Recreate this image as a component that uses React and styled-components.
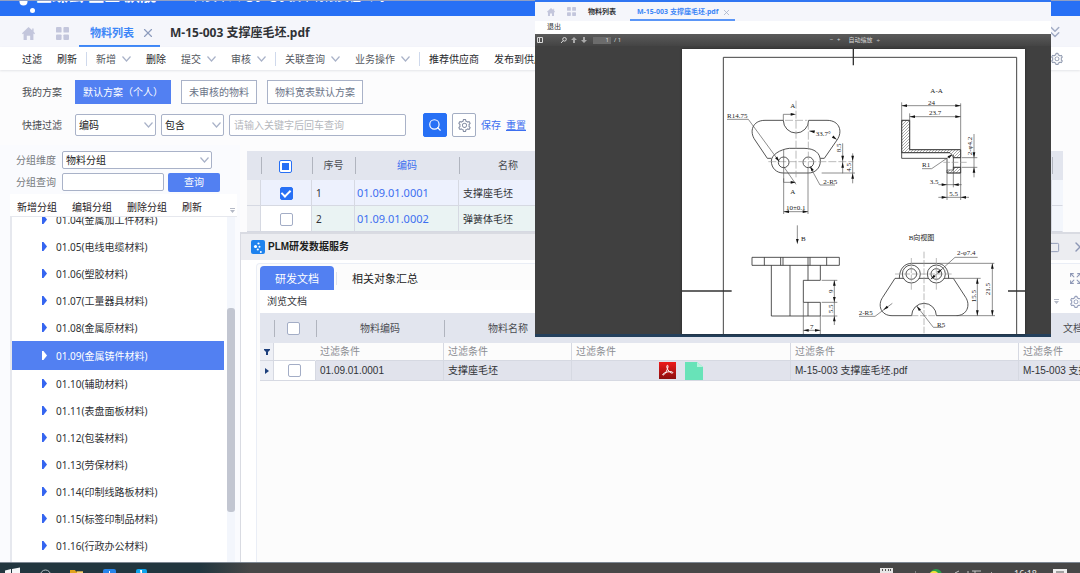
import React from 'react';
import styled, { createGlobalStyle } from 'styled-components';
import { ChevronsDown, Search, X, Square, Expand } from 'lucide-react';
import { AiOutlineSetting } from 'react-icons/ai';

const GlobalStyle = createGlobalStyle`
  * {
    box-sizing: border-box;
  }
  body {
    margin: 0;
    overflow: hidden;
    font-family: 'Noto Sans', 'Noto Sans CJK SC', sans-serif;
    font-size: 10px;
    line-height: 16px;
    color: #303236;
  }
  button, input, select {
    font: inherit;
    color: inherit;
  }
  button {
    padding: 0;
    border: none;
    background: none;
    white-space: nowrap;
    cursor: pointer;
  }
`;

const Page = styled.div`
  position: relative;
  display: flex;
  flex-direction: column;
  height: 100vh;
  overflow: hidden;
  background: #fcfcfd;
`;

/* ---------- top banner and tabs ---------- */

const Banner = styled.header`
  display: flex;
  flex: none;
  align-items: flex-start;
  height: 16px;
  padding-left: 16px;
  overflow: hidden;
  background: #2770f5;
  border-top: 1px solid #8f9fc4;
  color: #fff;
  white-space: nowrap;
`;
const Brand = styled.div`
  width: 157px;
  margin-top: -16px;
  font-size: 16px;
  font-weight: 700;
  line-height: 20px;
`;
const Company = styled.div`
  margin-top: -12px;
  font-size: 12px;
  line-height: 16px;
`;
const TabStrip = styled.nav`
  display: flex;
  flex: none;
  align-items: center;
  height: 31px;
  padding: 0 16px 0 22px;
  background: #f5f6fb;
  color: #c3c7dc;
`;
const IconSlot = styled.button`
  display: flex;
  width: 13px;
  margin: 4px 21px 0 0;
  color: #c3c6dc;
`;
const Tab = styled.button`
  display: flex;
  align-items: center;
  gap: 7px;
  height: 31px;
  padding: 5px 5px 0 11px;
  margin-left: -11px;
  border-bottom: 2px solid ${props => (props.$active ? '#3d86f7' : 'transparent')};
  color: ${props => (props.$active ? '#3d86f7' : '#303236')};
  font-size: ${props => (props.$active ? '11px' : '12px')};
  font-weight: 700;
  & + & {
    margin-left: 0;
    padding-left: 10px;
  }
`;
const Spacer = styled.div`
  flex: 1;
`;
const Toolbar = styled.div`
  z-index: 1;
  display: flex;
  flex: none;
  align-items: center;
  gap: 15px;
  height: 23px;
  padding: 0 16px 0 22px;
  background: #fff;
  box-shadow: 0 1px 2px #e4e5e8;
  color: #8d97ad;
`;
const ToolButton = styled.button`
  display: flex;
  align-items: center;
  gap: 6px;
  color: ${props => (props.$menu ? '#54575e' : '#26282c')};
`;
const ToolSeparator = styled.span`
  flex: none;
  width: 1px;
  height: 14px;
  margin: 0 -6px;
  background: #cfd9ec;
`;

/* ---------- filters ---------- */

const Filters = styled.section`
  display: flex;
  flex: none;
  flex-direction: column;
  gap: 9px;
  height: 75px;
  padding: 10px 22px 0;
`;
const FilterRow = styled.div`
  display: flex;
  align-items: center;
  gap: 5px;
  height: 24px;
`;
const FilterLabel = styled.label`
  width: 48px;
  color: #4b4d52;
  white-space: nowrap;
`;
const Scheme = styled.button`
  height: 24px;
  margin-right: 5px;
  padding: 0 7px;
  border: 1px solid ${props => (props.$active ? '#5280f2' : '#a9b2c8')};
  background: ${props => (props.$active ? '#5280f2' : '#fff')};
  color: ${props => (props.$active ? '#fff' : '#6b7488')};
`;
const SelectBox = styled.span`
  display: grid;
  align-items: center;
  width: ${props => props.$width}px;
  color: #a9b2c8;
  svg {
    grid-area: 1 / 1;
    justify-self: end;
    margin-right: 3px;
    pointer-events: none;
  }
`;
const SelectField = styled.select`
  grid-area: 1 / 1;
  width: 100%;
  height: ${props => props.$height}px;
  padding: 0 3px;
  appearance: none;
  border: 1px solid #a9b2c8;
  border-radius: 2px;
  background: #fff;
  color: #222;
`;
const TextField = styled.input`
  width: ${props => props.$width}px;
  height: ${props => props.$height}px;
  padding: 0 4px;
  border: 1px solid #a9b2c8;
  border-radius: 2px;
  background: #fff;
  &::placeholder {
    color: #b5b7bd;
  }
`;
const SquareButton = styled.button`
  display: flex;
  align-items: center;
  justify-content: center;
  width: 24px;
  height: 24px;
  border: 1px solid ${props => (props.$primary ? '#2770f5' : '#a3adc3')};
  border-radius: 2px;
  background: ${props => (props.$primary ? '#2770f5' : '#fff')};
  color: ${props => (props.$primary ? '#fff' : '#838ca3')};
  margin-left: ${props => (props.$primary ? '12px' : '0')};
`;
const TextLink = styled.a`
  color: #3d6ff0;
  text-decoration: none;
  & + & {
    text-decoration: underline;
  }
`;

/* ---------- group tree ---------- */

const Body = styled.div`
  display: flex;
  flex: 1;
  min-height: 0;
`;
const Sidebar = styled.aside`
  display: flex;
  flex: none;
  flex-direction: column;
  width: 240px;
  padding: 4px 3px 0 10px;
  background: #fafbfe;
`;
const GroupRow = styled.div`
  display: flex;
  align-items: center;
  gap: 4px;
  height: 22px;
  padding-left: 6px;
`;
const GroupLabel = styled.label`
  width: 42px;
  color: #777a80;
  white-space: nowrap;
`;
const QueryButton = styled.button`
  width: 52px;
  height: 19px;
  border-radius: 2px;
  background: #5280f2;
  color: #fff;
`;
const GroupActions = styled.div`
  display: flex;
  flex: none;
  gap: 15px;
  height: 23px;
  margin-top: 1px;
  padding: 4px 2px 0 7px;
  border-bottom: 1px solid #e6e8ee;
  background: #fff;
  color: #1f2125;
  svg {
    margin: 10px 0 0 auto;
  }
`;
const TreeBox = styled.div`
  display: flex;
  flex: 1;
  min-height: 0;
  margin-right: 2px;
  overflow: hidden;
  border-left: 2px solid #e6e8ee;
  background: #fff;
`;
const Tree = styled.ul`
  flex: 1;
  margin: -11px 3px 0 0;
  padding: 0;
  list-style: none;
`;
const TreeItem = styled.li`
  display: flex;
  align-items: center;
  gap: 9px;
  height: ${props => (props.$active ? '29px' : '27px')};
  padding-left: 30px;
  background: ${props => (props.$active ? '#5280f2' : 'transparent')};
  color: ${props => (props.$active ? '#fff' : '#303236')};
  white-space: nowrap;
  svg {
    color: ${props => (props.$active ? '#fff' : '#3565f0')};
  }
`;
const ScrollTrack = styled.div`
  width: 8px;
  padding-top: 91px;
  background: #f3f6fc;
`;
const ScrollThumb = styled.div`
  height: 204px;
  border-radius: 3px;
  background: #c2c6d1;
`;

/* ---------- data grids ---------- */

const Main = styled.main`
  display: flex;
  flex: 1;
  flex-direction: column;
  min-width: 0;
  padding-top: 6px;
`;
const MaterialWrap = styled.div`
  flex: none;
  padding: 0 17px 0 7px;
`;
const Grid = styled.table`
  width: ${props => props.$width || '100%'};
  border-collapse: separate;
  border-spacing: 0;
  table-layout: fixed;
`;
const HeadCell = styled.th`
  height: ${props => props.$height}px;
  padding: 0 ${props => (props.$check ? '3px' : '0')} 0 0;
  background: ${props => (props.$first ? 'none' : 'linear-gradient(#b0b4be, #b0b4be) left center / 1px 17px no-repeat')} #e2e5ee;
  color: ${props => (props.$link ? '#3d6ff0' : '#4b4d52')};
  font-weight: 400;
  line-height: 15px;
  white-space: nowrap;
`;
const Cell = styled.td`
  height: ${props => props.$height}px;
  padding: ${props => (props.$center ? '0' : '0 4px')};
  border-bottom: 1px solid #d6d9e2;
  border-right: 1px solid ${props => props.$line || '#d6d9e2'};
  background: ${props => props.$bg || '#fcfcfc'};
  text-align: ${props => (props.$center ? 'center' : 'left')};
  white-space: nowrap;
  overflow: hidden;
`;
const CodeLink = styled.a`
  margin-left: -2px;
  color: #3d6ff0;
  font-size: 11px;
  text-decoration: none;
`;
const Check = styled.input`
  display: inline-grid;
  place-content: center;
  width: 13px;
  height: 13px;
  margin: 0;
  vertical-align: middle;
  appearance: none;
  border: 1px solid #a3adc6;
  border-radius: 2px;
  background: #fff;
  &:checked {
    border-color: #2770f5;
    background: #2770f5;
  }
  &:checked::before {
    content: '';
    width: 4px;
    height: 7px;
    margin-bottom: 2px;
    border: solid #fff;
    border-width: 0 2px 2px 0;
    rotate: 45deg;
  }
  &:indeterminate {
    border-color: #2770f5;
  }
  &:indeterminate::before {
    content: '';
    width: 7px;
    height: 7px;
    background: #2770f5;
  }
`;
const FilterHint = styled.span`
  color: #8b8d93;
`;

/* ---------- PLM panel ---------- */

const Panel = styled.section`
  display: flex;
  flex: 1;
  flex-direction: column;
  min-height: 0;
  border: solid #d9dbe2;
  border-width: 2px 0 0 1px;
  background: #fff;
  font-family: 'Liberation Sans', 'Noto Sans CJK SC', sans-serif;
`;
const PanelTitle = styled.div`
  display: flex;
  flex: none;
  align-items: center;
  gap: 3px;
  height: 26px;
  padding-left: 10px;
  background: #ecedf1;
  color: #a3adc6;
`;
const TitleText = styled.h2`
  flex: 1;
  margin: 0;
  color: #1c1d20;
  font-size: 10px;
`;
const WindowButton = styled.button`
  display: flex;
  flex: none;
  width: 20px;
  color: #8d97b5;
  & + & {
    width: 8px;
    overflow: hidden;
  }
  svg {
    flex: none;
  }
`;
const PanelBody = styled.div`
  flex: 1;
  min-height: 0;
  margin: 3px 0 0 15px;
  padding-left: 3px;
  overflow: hidden;
  border: solid #eaeef6;
  border-width: 1px 0 0 1px;
  border-radius: 4px 0 0 0;
  background: #fcfcfc;
`;
const PanelTabs = styled.div`
  display: flex;
  align-items: center;
  height: 26px;
  padding-top: 2px;
  color: #8d97b5;
`;
const PanelTab = styled.button`
  height: 24px;
  padding: 2px 15px 0;
  border-radius: 4px 4px 0 0;
  background: ${props => (props.$active ? '#5280f2' : 'transparent')};
  color: ${props => (props.$active ? '#fff' : '#222')};
  font-size: 11px;
`;
const TabDivider = styled.span`
  width: 1px;
  height: 13px;
  margin-left: 2px;
  background: #dfe3ec;
`;
const CutIcon = styled.button`
  display: flex;
  width: 11px;
  overflow: hidden;
  color: #8d97b5;
  svg {
    flex: none;
  }
`;
const PanelTools = styled.div`
  display: flex;
  align-items: center;
  gap: 10px;
  height: 23px;
  padding-left: 7px;
  background: #fff;
  color: #a3adc6;
  button:first-child {
    color: #36383d;
  }
`;
const FileIcons = styled.span`
  display: flex;
  justify-content: center;
  gap: 9px;
`;

/* ---------- floating document viewer ---------- */

const Viewer = styled.section`
  position: absolute;
  z-index: 2;
  top: 0;
  left: 535px;
  display: flex;
  flex-direction: column;
  width: 516px;
  height: 337px;
  border-top: 2px solid #2f75f2;
  border-bottom: 3px solid #24405c;
  background: #404040;
  font-size: 7px;
  line-height: 10px;
`;
const ViewerTabs = styled.div`
  display: flex;
  flex: none;
  align-items: center;
  height: 19px;
  padding-left: 12px;
  background: #f5f6fb;
  color: #c3c6dc;
  svg {
    margin-right: 12px;
  }
`;
const ViewerTab = styled.button`
  display: flex;
  align-items: center;
  gap: 4px;
  height: 19px;
  margin-right: 10px;
  padding: 3px 4px 0 0;
  border-bottom: 2px solid ${props => (props.$active ? '#5b96f7' : 'transparent')};
  color: ${props => (props.$active ? '#3d86f7' : '#303236')};
  font-weight: 700;
  & + & {
    padding-left: 7px;
  }
  svg {
    margin-right: 0;
  }
`;
const ViewerMenu = styled.div`
  flex: none;
  height: 13px;
  padding: 1px 12px 0;
  background: #fff;
  color: #303236;
`;
const PdfToolbar = styled.div`
  display: flex;
  flex: none;
  align-items: center;
  height: 12px;
  padding: 0 171px 0 2px;
  background: linear-gradient(#5b5b5b, #444);
  color: #d8d8d8;
  font-size: 6px;
  svg {
    flex: none;
    margin-right: 4px;
  }
`;
const PageNumber = styled.input`
  width: 18px;
  height: 7px;
  margin: 0 3px 0 2px;
  padding: 0 2px;
  border: none;
  background: #6c6c6c;
  color: #ddd;
  text-align: right;
`;
const ZoomText = styled.span`
  margin: 0 4px;
  line-height: 7px;
`;
const PdfPage = styled.div`
  flex: 1;
  min-height: 0;
  margin: 3px 26px 0 147px;
  overflow: hidden;
  background: #fff;
  box-shadow: 0 0 2px #222;
  svg {
    display: block;
  }
`;
const DrawingText = styled.text`
  fill: #222;
  stroke: none;
  font-family: 'Liberation Serif', 'Noto Sans CJK SC', serif;
  font-size: 21px;
`;

/* ---------- taskbar ---------- */

const Taskbar = styled.footer`
  display: flex;
  flex: none;
  align-items: flex-start;
  height: 11px;
  overflow: hidden;
  border-top: 1px solid #7d8793;
  background: linear-gradient(90deg, #22363f 200px, #474747 250px);
  color: #e8e8e8;
  font-size: 9px;
  svg {
    flex: none;
    display: block;
  }
`;
const Clock = styled.time`
  margin: 6px 16px 0 22px;
  line-height: 10px;
`;

const HomeIcon = ({ size = 13 }) => (
  <svg width={size} height={size} viewBox="0 0 14 14" fill="currentColor">
    <path d="M7 0 11 3.6V1.5h1.5V5L14 6.6l-.8 1.1-.9-.6V14H8.8V9.5H5.2V14H1.7V7.1l-.9.6L0 6.6z" />
  </svg>
);

const AppsIcon = ({ size = 13 }) => (
  <svg width={size} height={size} viewBox="0 0 14 14" fill="currentColor">
    <rect width="6" height="6" rx="1" />
    <rect x="8" width="6" height="6" rx="1" />
    <rect y="8" width="6" height="6" rx="1" />
    <rect x="8" y="8" width="6" height="6" rx="1" />
  </svg>
);

const Caret = () => (
  <svg width="9" height="6" viewBox="0 0 9 6" fill="none" stroke="#a9b2c8" strokeWidth="1.200">
    <path d="M.5.5 4.500 5 8.500.5" />
  </svg>
);

const OverflowIcon = () => (
  <svg width="5" height="6" viewBox="0 0 5 6" fill="#b4b9c6">
    <path d="M0 0h5v1H0zM0 2h5L2.500 5z" />
  </svg>
);

const PlmIcon = () => (
  <svg width="14" height="14" viewBox="0 0 14 14">
    <rect width="14" height="14" rx="2" fill="#1f83ee" />
    <circle cx="4.500" cy="6.500" r="1.600" fill="#fff" />
    <circle cx="7.500" cy="3.500" r="1.100" fill="#fff" />
    <circle cx="8.500" cy="6.800" r="1" fill="#fff" />
    <circle cx="6.800" cy="9.500" r="1.100" fill="#fff" />
    <circle cx="9.800" cy="12" r="1" fill="#fff" />
  </svg>
);

const PdfIcon = () => (
  <svg width="17" height="17" viewBox="0 0 17 17">
    <defs>
      <linearGradient id="pdfRed" x2="0" y2="1">
        <stop stopColor="#ee1a1a" />
        <stop offset="1" stopColor="#8c0f0f" />
      </linearGradient>
    </defs>
    <rect width="17" height="17" fill="url(#pdfRed)" />
    <path
      d="M8 3.500c1.500-1 1.200 2 0 4.500-1 2.300-2.600 5-3.800 5-1.500 0 .3-2.200 4-3 3-.7 5.600-.4 5.600.6 0 1-2 .6-3.600-1.100C8.300 7.600 7.200 4.300 8 3.500z"
      fill="none"
      stroke="#fff"
      strokeWidth="1"
    />
  </svg>
);

const DocIcon = () => (
  <svg width="18" height="18" viewBox="0 0 18 18">
    <path d="M0 0h12l6 5v13H0z" fill="#68e3b8" />
    <path d="M12 0v5h6z" fill="#b9f4de" />
  </svg>
);

const TreeArrow = () => (
  <svg width="5" height="9" viewBox="0 0 5 9" fill="currentColor">
    <path d="M0 0h1.500L5 4.500 1.500 9H0z" />
  </svg>
);

// dimension label; turn draws it bottom-to-top
const Dim = ({ x, y, turn, children }) => (
  <DrawingText x={x} y={y} transform={turn ? `rotate(-90 ${x} ${y})` : undefined}>
    {children}
  </DrawingText>
);

// filled arrow head with its tip at x,y
const Tip = ({ x, y, a = 0 }) => (
  <path d="M0 0-16-4V4z" fill="#111" stroke="none" transform={`translate(${x} ${y}) rotate(${a})`} />
);

const Drawing = () => (
  <svg width="100%" viewBox="0 0 1029 855" fill="none" stroke="#555" strokeWidth="2">
    <defs>
      <pattern id="hatch" width="9" height="9" patternUnits="userSpaceOnUse">
        <path d="M0 9 9 0" stroke="#555" strokeWidth="1.500" />
      </pattern>
    </defs>
    <g transform="translate(-6 3)">
      <path d="M130 855V22H1010V855" stroke="#444" strokeWidth="3" />
      <path d="M520-3V46M6 723H155M984 723H1035" stroke="#333" strokeWidth="4" />

      {/* front view */}
      <g stroke="#333" strokeWidth="2.500">
        <path d="M310 211H255C217 211 207 245 225 270L262 325H274M386 211H441C479 211 489 245 471 270L433 325H421" />
        <path d="M310 211A38 38 0 0 0 386 211" />
        <path d="M328 295H372C405 295 421 310 421 333 421 355 405 369 385 369H310C290 369 274 355 274 333 274 315 300 298 328 295Z" />
        <circle cx="311" cy="337" r="16" />
        <circle cx="385" cy="337" r="16" />
      </g>
      <g stroke="#999" strokeDasharray="24 6">
        <path d="M348 152V382M385 215V352M265 335H520M315 211H382" />
      </g>
      <path d="M311 300V492M384 352V492M311 485H384" />
      <path d="M141 208H205L298 335M311 350 348 403" />
      <path d="M310 211V193H340M311 385V397H340" />
      <path d="M390 350 420 405H465" />
      <path d="M388 243H405M425 369H525M488 280V370M518 310V400" />
      <Tip x={348} y={193} />
      <Tip x={348} y={397} />
      <Tip x={298} y={335} a={54} />
      <Tip x={390} y={348} a={-120} />
      <Tip x={388} y={243} a={190} />
      <Tip x={471} y={269} a={35} />
      <Tip x={311} y={485} a={180} />
      <Tip x={384} y={485} />
      <Tip x={488} y={333} a={90} />
      <Tip x={488} y={337} a={-90} />
      <Tip x={518} y={333} a={90} />
      <Tip x={518} y={370} a={-90} />
      <Dim x={141} y={203}>R14.75</Dim>
      <Dim x={331} y={175}>A</Dim>
      <Dim x={331} y={433}>A</Dim>
      <Dim x={407} y={258}>33.7°</Dim>
      <Dim x={484} y={307} turn>8.5</Dim>
      <Dim x={512} y={365} turn>4.5</Dim>
      <Dim x={430} y={401}>2-R5</Dim>
      <Dim x={318} y={480}>10±0.1</Dim>

      {/* side view */}
      <path d="M352 526V570" />
      <Tip x={352} y={583} a={90} />
      <Dim x={363} y={573}>B</Dim>
      <g stroke="#333" strokeWidth="2.500">
        <path d="M216 622H478V646H216ZM253 622V646M302 622V646M309 622V646M384 622V646M390 622V646M440 622V646" />
        <path d="M274 646V798H421V757H370V691H421V646M330 646V798M384 646V691M384 757V798" />
      </g>
      <path d="M425 691H472M425 757H472M425 798H472M463 691V825M370 757V852M421 798V852M370 841H421" />
      <Tip x={463} y={691} a={-90} />
      <Tip x={463} y={757} a={90} />
      <Tip x={463} y={798} a={-90} />
      <Tip x={370} y={841} a={180} />
      <Tip x={421} y={841} />
      <Dim x={458} y={729} turn>9</Dim>
      <Dim x={460} y={790} turn>5.5</Dim>
      <Dim x={390} y={836}>7</Dim>
    </g>

    <g transform="translate(534 3)">
      {/* section A-A */}
      <path d="M125 211H149V299H302V323H280L270 308H125Z" fill="url(#hatch)" />
      <path d="M261 360H280V352H302V369H261Z" fill="url(#hatch)" />
      <g stroke="#333" strokeWidth="2.500">
        <path d="M125 211H149V299H302V369H261V325H125ZM125 308H270M280 315V360M280 323H302M280 352H302" />
      </g>
      <path d="M125 157V211M302 160V299M125 167H302M149 190V211M149 200H302" />
      <path d="M305 323H352M305 352H352M342 252V382M261 369V450M302 369V450M280 360V412" />
      <path d="M235 404H305M235 442H327M186 356H215L275 315" />
      <path d="M250 337H325" stroke="#999" strokeDasharray="20 5" />
      <Tip x={125} y={167} a={180} />
      <Tip x={302} y={167} />
      <Tip x={149} y={200} a={180} />
      <Tip x={302} y={200} />
      <Tip x={342} y={323} a={90} />
      <Tip x={342} y={352} a={-90} />
      <Tip x={278} y={313} a={-35} />
      <Tip x={261} y={404} />
      <Tip x={280} y={404} a={180} />
      <Tip x={261} y={442} />
      <Tip x={302} y={442} a={180} />
      <Dim x={211} y={128}>A-A</Dim>
      <Dim x={204} y={164}>24</Dim>
      <Dim x={207} y={196}>23.7</Dim>
      <Dim x={337} y={316} turn>2-φ4.2</Dim>
      <Dim x={186} y={352}>R1</Dim>
      <Dim x={209} y={401}>3.5</Dim>
      <Dim x={268} y={438}>5.5</Dim>

      {/* view B */}
      <Dim x={146} y={570}>B向视图</Dim>
      <g stroke="#333" strokeWidth="2.500">
        <path d="M105 685 68 742C52 765 62 797 96 797H155A37 37 0 0 1 229 797H288C322 797 332 765 317 742L280 685Z" />
        <path d="M118 685C118 655 135 640 155 640H230C250 640 266 655 266 685" />
        <circle cx="154" cy="672" r="27" fill="#fff" />
        <circle cx="229" cy="672" r="27" fill="#fff" />
        <circle cx="154" cy="672" r="16" />
        <circle cx="229" cy="672" r="16" />
      </g>
      <g stroke="#999" strokeDasharray="20 5">
        <path d="M154 624V722M229 624V722M192 605V852M105 672H280M155 797H229" />
      </g>
      <path d="M212 688 285 622H353M235 640H403M280 685H362M290 797H405M352 685V797M397 640V797" />
      <path d="M170 768 220 832H250M-3 799H45L97 760" />
      <Tip x={212} y={688} a={138} />
      <Tip x={246} y={657} a={-42} />
      <Tip x={352} y={685} a={-90} />
      <Tip x={352} y={797} a={90} />
      <Tip x={397} y={640} a={-90} />
      <Tip x={397} y={797} a={90} />
      <Tip x={170} y={768} a={-128} />
      <Tip x={70} y={780} a={143} />
      <Dim x={291} y={616}>2-φ7.4</Dim>
      <Dim x={347} y={757} turn>15.5</Dim>
      <Dim x={390} y={736} turn>21.5</Dim>
      <Dim x={231} y={830}>R5</Dim>
      <Dim x={-4} y={794}>2-R5</Dim>
    </g>
  </svg>
);

const tools = [
  { label: '过滤' },
  { label: '刷新' },
  null,
  { label: '新增', menu: true },
  { label: '删除' },
  { label: '提交', menu: true },
  { label: '审核', menu: true },
  null,
  { label: '关联查询', menu: true },
  { label: '业务操作', menu: true },
  null,
  { label: '推荐供应商' },
  { label: '发布到供应商' },
];

const groups = [
  '01.04(金属加工件材料)',
  '01.05(电线电缆材料)',
  '01.06(塑胶材料)',
  '01.07(工量器具材料)',
  '01.08(金属原材料)',
  '01.09(金属铸件材料)',
  '01.10(辅助材料)',
  '01.11(表盘面板材料)',
  '01.12(包装材料)',
  '01.13(劳保材料)',
  '01.14(印制线路板材料)',
  '01.15(标签印制品材料)',
  '01.16(行政办公材料)',
];

const materials = [
  { no: 1, code: '01.09.01.0001', name: '支撑座毛坯', checked: true, bg: '#edf1fd' },
  { no: 2, code: '01.09.01.0002', name: '弹簧体毛坯', checked: false, bg: '#eaf3f3' },
];

const setPartial = el => {
  if (el) el.indeterminate = true;
};

const GroupPanel = () => (
  <Sidebar>
    <GroupRow>
      <GroupLabel htmlFor="dimension">分组维度</GroupLabel>
      <SelectBox $width={150}>
        <SelectField id="dimension" $height={18}>
          <option>物料分组</option>
        </SelectField>
        <Caret />
      </SelectBox>
    </GroupRow>
    <GroupRow>
      <GroupLabel htmlFor="groupQuery">分组查询</GroupLabel>
      <TextField id="groupQuery" $width={102} $height={18} />
      <QueryButton>查询</QueryButton>
    </GroupRow>
    <GroupActions>
      <button>新增分组</button>
      <button>编辑分组</button>
      <button>删除分组</button>
      <button>刷新</button>
      <OverflowIcon />
    </GroupActions>
    <TreeBox>
      <Tree>
        {groups.map(name => (
          <TreeItem key={name} $active={name.startsWith('01.09')}>
            <TreeArrow />
            {name}
          </TreeItem>
        ))}
      </Tree>
      <ScrollTrack>
        <ScrollThumb />
      </ScrollTrack>
    </TreeBox>
  </Sidebar>
);

const MaterialGrid = () => (
  <MaterialWrap>
    <Grid>
      <colgroup>
        <col width="14" />
        <col width="51" />
        <col width="43" />
        <col width="104" />
        <col width="98" />
        <col />
        <col width="11" />
      </colgroup>
      <thead>
        <tr>
          <HeadCell $height={29} $first />
          <HeadCell $check><Check type="checkbox" aria-label="全选" ref={setPartial} /></HeadCell>
          <HeadCell>序号</HeadCell>
          <HeadCell $link>编码</HeadCell>
          <HeadCell>名称</HeadCell>
          <HeadCell />
          <HeadCell />
        </tr>
      </thead>
      <tbody>
        {materials.map(row => (
          <tr key={row.no}>
            <Cell $height={26} $bg="#f0f1f4" />
            <Cell $center $bg={row.checked ? row.bg : '#fff'}>
              <Check type="checkbox" aria-label={row.code} defaultChecked={row.checked} />
            </Cell>
            <Cell $bg={row.bg}>{row.no}</Cell>
            <Cell $bg={row.bg}><CodeLink href="#">{row.code}</CodeLink></Cell>
            <Cell $bg={row.bg} $line={row.bg}>{row.name}</Cell>
            <Cell $bg={row.bg} />
            <Cell $bg="#f3f6fc" $line="#f3f6fc" />
          </tr>
        ))}
      </tbody>
    </Grid>
  </MaterialWrap>
);

const FilterCells = () => (
  <tr>
    <Cell $height={18} $center $bg="#eef0f6">
      <svg width="6" height="6" viewBox="0 0 6 6" fill="#1c3f7c"><path d="M0 0h6v1L4 3v3H2V3L0 1z" /></svg>
    </Cell>
    <Cell $line="#fcfcfc" />
    {[1, 2, 3, 4, 5].map(n => (
      <Cell key={n}><FilterHint>过滤条件</FilterHint></Cell>
    ))}
  </tr>
);

const PlmPanel = () => (
  <Panel>
    <PanelTitle>
      <PlmIcon />
      <TitleText>PLM研发数据服务</TitleText>
      <WindowButton aria-label="最大化"><Square size={11} /></WindowButton>
      <WindowButton aria-label="关闭"><X size={16} /></WindowButton>
    </PanelTitle>
    <PanelBody>
      <PanelTabs>
        <PanelTab $active>研发文档</PanelTab>
        <TabDivider />
        <PanelTab>相关对象汇总</PanelTab>
        <Spacer />
        <CutIcon aria-label="展开"><Expand size={13} /></CutIcon>
      </PanelTabs>
      <PanelTools>
        <button>浏览文档</button>
        <Spacer />
        <OverflowIcon />
        <CutIcon aria-label="设置"><AiOutlineSetting size={14} /></CutIcon>
      </PanelTools>
      <Grid $width="887px">
        <colgroup>
          <col width="14" />
          <col width="42" />
          <col width="128" />
          <col width="128" />
          <col width="219" />
          <col width="228" />
          <col width="128" />
        </colgroup>
        <thead>
          <tr>
            <HeadCell $height={30} $first />
            <HeadCell $check><Check type="checkbox" aria-label="全选" /></HeadCell>
            <HeadCell>物料编码</HeadCell>
            <HeadCell>物料名称</HeadCell>
            <HeadCell />
            <HeadCell />
            <HeadCell>文档名称</HeadCell>
          </tr>
        </thead>
        <tbody>
          <FilterCells />
          <tr>
            <Cell $height={20} $center $bg="#eef0f6">
              <svg width="4" height="6" viewBox="0 0 4 6" fill="#1c3f7c"><path d="M0 0 4 3 0 6z" /></svg>
            </Cell>
            <Cell $center $bg="#fff"><Check type="checkbox" aria-label="01.09.01.0001" /></Cell>
            <Cell $bg="#e1e3ec">01.09.01.0001</Cell>
            <Cell $bg="#e1e3ec">支撑座毛坯</Cell>
            <Cell $bg="#e1e3ec" $center>
              <FileIcons><PdfIcon /><DocIcon /></FileIcons>
            </Cell>
            <Cell $bg="#e1e3ec">M-15-003 支撑座毛坯.pdf</Cell>
            <Cell $bg="#e1e3ec">M-15-003 支撑座毛坯.pdf</Cell>
          </tr>
        </tbody>
      </Grid>
    </PanelBody>
  </Panel>
);

const DocumentViewer = () => (
  <Viewer>
    <ViewerTabs>
      <HomeIcon size={8} />
      <AppsIcon size={9} />
      <ViewerTab>物料列表</ViewerTab>
      <ViewerTab $active>
        M-15-003 支撑座毛坯.pdf
        <X size={9} color="#a3adc6" />
      </ViewerTab>
    </ViewerTabs>
    <ViewerMenu><button>退出</button></ViewerMenu>
    <PdfToolbar>
      <svg width="6" height="6" viewBox="0 0 6 6" fill="none" stroke="currentColor"><path d="M.5.5h5v5h-5zM2.500 1v4" /></svg>
      <svg width="10" height="6" />
      <svg width="6" height="6" viewBox="0 0 6 6" fill="none" stroke="currentColor"><circle cx="3.500" cy="2.300" r="1.800" /><path d="M2.200 3.600 0 6" /></svg>
      <svg width="6" height="6" viewBox="0 0 6 6" fill="#aaa"><path d="M3 0 6 3H4v3H2V3H0z" /></svg>
      <svg width="6" height="6" viewBox="0 0 6 6" fill="#aaa"><path d="M3 6 0 3h2V0h2v3h2z" /></svg>
      <PageNumber aria-label="页码" defaultValue="1" />
      / 1
      <Spacer />
      <span>−</span>
      <ZoomText>+</ZoomText>
      <ZoomText>自动缩放</ZoomText>
      <span>÷</span>
    </PdfToolbar>
    <PdfPage>
      <Drawing />
    </PdfPage>
  </Viewer>
);

const TaskIcons = () => (
  <svg width="150" height="14" viewBox="0 0 150 14">
    <path d="M5 7.500 11 6v8H5zM12 6l8-1.500V14h-8z" fill="#f4f6f7" />
    <circle cx="45.500" cy="12" r="5" fill="none" stroke="#b8c2c6" />
    <path d="M70 7h5l1 1.500h7V14H70z" fill="#e0a21c" />
    <path d="M77 8.500h6V14h-6z" fill="#f8d579" />
    <rect x="103" y="6" width="13" height="10" rx="2" fill="#2784ea" />
    <path d="M109 8h1v2h2v2h-5v-2h2z" fill="#fff" />
    <rect x="136" y="6" width="11" height="10" rx="2" fill="#0fa5ee" />
    <path d="M140 7h2v3h3l-4 4z" fill="#fff" />
  </svg>
);

const TrayIcons = () => (
  <svg width="112" height="14" viewBox="0 0 112 14">
    <rect y="5" width="13" height="9" fill="#e6e6e6" />
    <path d="M2 6h1v2H2zM5 6h1v2H5zM8 6h1v2H8zM10 6h1v2h-1z" fill="#555" />
    <path d="M35 9h1" stroke="#bbb" />
    <circle cx="56" cy="12" r="6" fill="#2ca24b" />
    <circle cx="54" cy="13" r="5" fill="#f3e23b" />
    <path d="M75 10l4-2M88 8v4M92 8h9M95 8v4M111 10l3-2" stroke="#c4c4c4" fill="none" />
  </svg>
);

const App = () => (
  <Page>
    <GlobalStyle />
    <Banner>
      <svg width="20" height="16" viewBox="0 0 20 16" fill="#fff">
        <circle cx="7.500" cy="0.500" r="4" />
        <circle cx="16.500" cy="9.500" r="2.500" />
      </svg>
      <Brand>金蝶云 星空 旗舰</Brand>
      <Company>自贡华川电子电子技术有限责任公司</Company>
    </Banner>
    <TabStrip>
      <IconSlot aria-label="首页"><HomeIcon /></IconSlot>
      <IconSlot aria-label="应用"><AppsIcon /></IconSlot>
      <Tab $active>
        物料列表
        <X size={14} color="#8d9cbd" />
      </Tab>
      <Tab>M-15-003 支撑座毛坯.pdf</Tab>
      <Spacer />
      <ChevronsDown size={18} strokeWidth={2} color="#a3adc6" />
    </TabStrip>
    <Toolbar>
      {tools.map((tool, i) =>
        tool ? (
          <ToolButton key={tool.label} $menu={tool.menu}>
            {tool.label}
            {tool.menu ? <Caret /> : null}
          </ToolButton>
        ) : (
          <ToolSeparator key={i} />
        )
      )}
      <Spacer />
      <AiOutlineSetting size={14} />
    </Toolbar>
    <Filters>
      <FilterRow>
        <FilterLabel as="span">我的方案</FilterLabel>
        <Scheme $active>默认方案（个人）</Scheme>
        <Scheme>未审核的物料</Scheme>
        <Scheme>物料宽表默认方案</Scheme>
      </FilterRow>
      <FilterRow>
        <FilterLabel htmlFor="field">快捷过滤</FilterLabel>
        <SelectBox $width={81}>
          <SelectField id="field" $height={22}>
            <option>编码</option>
          </SelectField>
          <Caret />
        </SelectBox>
        <SelectBox $width={63}>
          <SelectField aria-label="条件" $height={22}>
            <option>包含</option>
          </SelectField>
          <Caret />
        </SelectBox>
        <TextField aria-label="关键字" placeholder="请输入关键字后回车查询" $width={177} $height={22} />
        <SquareButton $primary aria-label="查询"><Search size={14} /></SquareButton>
        <SquareButton aria-label="设置"><AiOutlineSetting size={15} /></SquareButton>
        <TextLink href="#">保存</TextLink>
        <TextLink href="#">重置</TextLink>
      </FilterRow>
    </Filters>
    <Body>
      <GroupPanel />
      <Main>
        <MaterialGrid />
        <PlmPanel />
      </Main>
    </Body>
    <Taskbar>
      <TaskIcons />
      <Spacer />
      <TrayIcons />
      <Clock>16:18</Clock>
      <svg width="27" height="14" viewBox="0 0 27 14">
        <rect y="6" width="14" height="8" fill="#eee" />
        <path d="M3 9h8" stroke="#555" />
      </svg>
    </Taskbar>
    <DocumentViewer />
  </Page>
);

export default App;
